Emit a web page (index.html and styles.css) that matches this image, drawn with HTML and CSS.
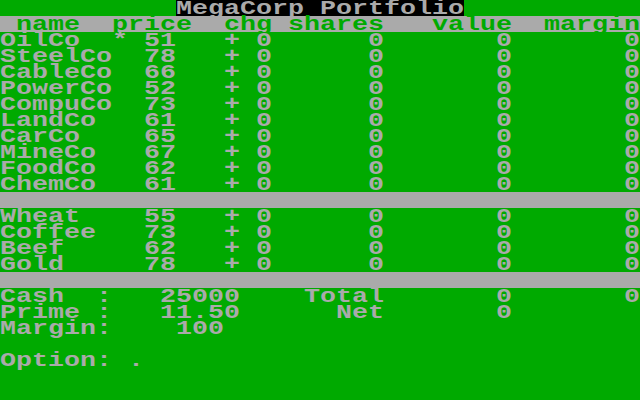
FILE: index.html
```html
<!DOCTYPE html>
<html>
<head>
<meta charset="utf-8">
<link rel="stylesheet" href="styles.css">
</head>
<body>
<div class="screen">
  <div class="row titlerow"><span class="pad">           </span><span class="title">MegaCorp Portfolio</span></div>
  <div class="row bar"> name  price  chg shares   value  margin</div>
  <div class="row">OilCo  * 51   + 0      0       0       0</div>
  <div class="row">SteelCo  78   + 0      0       0       0</div>
  <div class="row">CableCo  66   + 0      0       0       0</div>
  <div class="row">PowerCo  52   + 0      0       0       0</div>
  <div class="row">CompuCo  73   + 0      0       0       0</div>
  <div class="row">LandCo   61   + 0      0       0       0</div>
  <div class="row">CarCo    65   + 0      0       0       0</div>
  <div class="row">MineCo   67   + 0      0       0       0</div>
  <div class="row">FoodCo   62   + 0      0       0       0</div>
  <div class="row">ChemCo   61   + 0      0       0       0</div>
  <div class="row bar"></div>
  <div class="row">Wheat    55   + 0      0       0       0</div>
  <div class="row">Coffee   73   + 0      0       0       0</div>
  <div class="row">Beef     62   + 0      0       0       0</div>
  <div class="row">Gold     78   + 0      0       0       0</div>
  <div class="row bar"></div>
  <div class="row">Cash  :   25000    Total       0       0</div>
  <div class="row">Prime :   11.50      Net       0</div>
  <div class="row">Margin:    100</div>
  <div class="row"></div>
  <div class="row">Option: .</div>
  <div class="row"></div>
  <div class="row"></div>
</div>
</body>
</html>
```
FILE: styles.css
```css
html, body {
  margin: 0;
  padding: 0;
  background: #00aa00;
  overflow: hidden;
}
.screen {
  width: 480px;
  height: 400px;
  background: #00aa00;
  color: #aaaaaa;
  font-family: "Liberation Mono", monospace;
  font-weight: bold;
  font-size: 20px;
  transform: scaleX(1.33333);
  transform-origin: 0 0;
  display: flex;
  flex-direction: column;
}
.row {
  box-sizing: border-box;
  height: 16px;
  padding-top: 2px;
  line-height: 14px;
  white-space: pre;
  flex: 0 0 16px;
}
.bar {
  background: #aaaaaa;
  color: #00aa00;
}
.titlerow {
  padding-top: 0;
  display: flex;
}
.title {
  box-sizing: border-box;
  display: block;
  height: 16px;
  padding-top: 2px;
  line-height: 14px;
  background: #000000;
  color: #aaaaaa;
}
```
